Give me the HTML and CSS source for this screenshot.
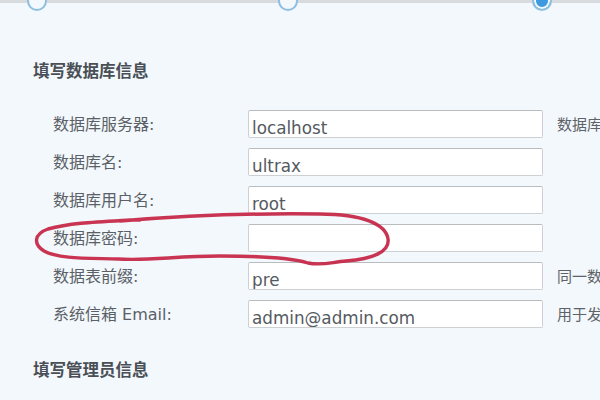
FILE: index.html
```html
<!DOCTYPE html>
<html lang="zh">
<head>
<meta charset="utf-8">
<title>安装向导</title>
<link rel="stylesheet" href="styles.css">
</head>
<body>
<div class="page">
  <div class="steps">
    <span class="step"></span>
    <span class="step"></span>
    <span class="step current"></span>
  </div>

  <h2 class="section-title first">填写数据库信息</h2>
  <div class="form">
    <label class="label">数据库服务器:</label>
    <div class="field">localhost</div>
    <div class="hint">数据库服务器地址，一般为 localhost</div>

    <label class="label">数据库名:</label>
    <div class="field">ultrax</div>
    <div class="hint"></div>

    <label class="label">数据库用户名:</label>
    <div class="field">root</div>
    <div class="hint"></div>

    <label class="label">数据库密码:</label>
    <div class="field"></div>
    <div class="hint"></div>

    <label class="label">数据表前缀:</label>
    <div class="field">pre</div>
    <div class="hint">同一数据库运行多个论坛时，请修改前缀</div>

    <label class="label">系统信箱 Email:</label>
    <div class="field">admin@admin.com</div>
    <div class="hint">用于发送程序错误报告</div>
  </div>

  <h2 class="section-title second">填写管理员信息</h2>

  <svg class="annotation" width="600" height="400" viewBox="0 0 600 400" aria-hidden="true">
    <path d="M120 221 C 180 216, 250 213, 320 214 C 362 214, 386 224, 388 239 C 390 252, 372 259, 346 261 C 332 262, 322 266, 308 263 C 292 258, 262 256, 220 256 C 175 256, 150 261, 118 259 C 88 258, 58 259, 44 251 C 33 244, 34 234, 48 229 C 70 223, 95 222, 130 220 L 140 220"
      fill="none" stroke="#c42343" stroke-width="3.4" stroke-linecap="round" stroke-linejoin="round" opacity="0.92"/>
  </svg>
</div>
</body>
</html>
```

FILE: styles.css
```css
html, body {
  margin: 0;
  padding: 0;
}
body {
  width: 600px;
  height: 400px;
  overflow: hidden;
  background: #f2f8fc;
  font-family: "DejaVu Sans", "Noto Sans CJK SC", sans-serif;
}
.page {
  position: relative;
  width: 600px;
  height: 400px;
  overflow: hidden;
}
.steps {
  height: 3px;
  background: #d8dbdd;
  display: flex;
  align-items: flex-end;
  padding-left: 27px;
  gap: 231px;
}
.step {
  flex: none;
  width: 16px;
  height: 16px;
  border: 2px solid #8fbfe0;
  border-radius: 50%;
  background: #f2f8fc;
  margin-bottom: -8px;
  box-sizing: content-box;
}
.step.current {
  background: #3d9ae0;
  box-shadow: inset 0 0 0 2px #f2f8fc;
  margin-left: 3px;
}
.section-title {
  margin: 0;
  font-family: "Noto Sans CJK SC", sans-serif;
  font-size: 16.5px;
  font-weight: bold;
  color: #4a4f55;
  padding-left: 33px;
  line-height: 20px;
}
.section-title.first {
  margin-top: 57px;
}
.section-title.second {
  margin-top: 31px;
}
.form {
  display: grid;
  grid-template-columns: 181px 295px auto;
  grid-auto-rows: 28px;
  column-gap: 14px;
  row-gap: 10px;
  margin-top: 30px;
  padding-left: 53px;
  white-space: nowrap;
  width: 900px;
}
.label {
  font-size: 16px;
  color: #5b6066;
  line-height: 30px;
}
.field {
  height: 26px;
  border: 1px solid #cdd1d4;
  border-top-color: #b9bdc0;
  border-radius: 2px;
  background: #fff;
  font-size: 16.8px;
  color: #555a5f;
  line-height: 35px;
  padding-left: 3px;
  overflow: hidden;
}
.hint {
  font-family: "Noto Sans CJK SC", sans-serif;
  font-size: 15px;
  color: #5e6368;
  line-height: 28px;
}
.annotation {
  position: absolute;
  left: 0;
  top: 0;
  pointer-events: none;
  filter: blur(0.4px);
}
```
